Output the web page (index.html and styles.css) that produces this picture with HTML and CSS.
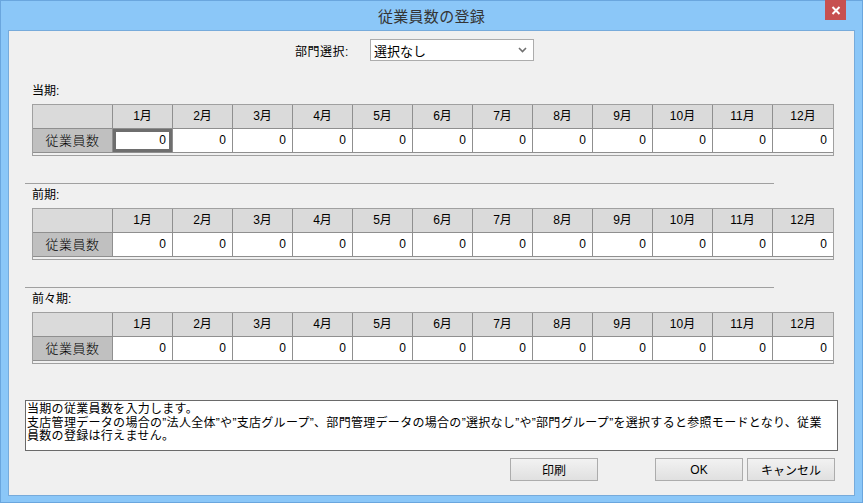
FILE: index.html
```html
<!DOCTYPE html>
<html lang="ja">
<head>
    <meta charset="UTF-8">
    <title>従業員数の登録</title>
    <link rel="stylesheet" href="styles.css">
</head>
<body>
    <div class="window">
        <div class="titlebar">
            <span></span>
            <span class="title">従業員数の登録</span>
            <button class="close" type="button">
                <svg width="10" height="9" viewBox="0 0 10 9"><path d="M1.5 1 L8.5 8 M8.5 1 L1.5 8" stroke="#fff" stroke-width="2" fill="none"/></svg>
            </button>
        </div>
        <div class="client">
            <div class="dept-row">
                <label class="dept-label">部門選択:</label>
                <div class="select">
                    <span>選択なし</span>
                    <svg class="chev" width="9" height="6" viewBox="0 0 9 6"><path d="M1 1 L4.5 4.5 L8 1" stroke="#707070" stroke-width="1.6" fill="none"/></svg>
                </div>
            </div>

            <!-- 当期 -->
            <div class="period-label first">当期:</div>
            <div class="grid">
                <div class="grid-row head">
                    <div class="cell"></div>
                    <div class="cell">1月</div><div class="cell">2月</div><div class="cell">3月</div><div class="cell">4月</div>
                    <div class="cell">5月</div><div class="cell">6月</div><div class="cell">7月</div><div class="cell">8月</div>
                    <div class="cell">9月</div><div class="cell">10月</div><div class="cell">11月</div><div class="cell">12月</div>
                </div>
                <div class="grid-row data">
                    <div class="cell row-label">従業員数</div>
                    <div class="cell num selected">0</div><div class="cell num">0</div><div class="cell num">0</div><div class="cell num">0</div>
                    <div class="cell num">0</div><div class="cell num">0</div><div class="cell num">0</div><div class="cell num">0</div>
                    <div class="cell num">0</div><div class="cell num">0</div><div class="cell num">0</div><div class="cell num">0</div>
                </div>
            </div>

            <div class="sep"></div>

            <!-- 前期 -->
            <div class="period-label">前期:</div>
            <div class="grid">
                <div class="grid-row head">
                    <div class="cell"></div>
                    <div class="cell">1月</div><div class="cell">2月</div><div class="cell">3月</div><div class="cell">4月</div>
                    <div class="cell">5月</div><div class="cell">6月</div><div class="cell">7月</div><div class="cell">8月</div>
                    <div class="cell">9月</div><div class="cell">10月</div><div class="cell">11月</div><div class="cell">12月</div>
                </div>
                <div class="grid-row data">
                    <div class="cell row-label">従業員数</div>
                    <div class="cell num">0</div><div class="cell num">0</div><div class="cell num">0</div><div class="cell num">0</div>
                    <div class="cell num">0</div><div class="cell num">0</div><div class="cell num">0</div><div class="cell num">0</div>
                    <div class="cell num">0</div><div class="cell num">0</div><div class="cell num">0</div><div class="cell num">0</div>
                </div>
            </div>

            <div class="sep"></div>

            <!-- 前々期 -->
            <div class="period-label">前々期:</div>
            <div class="grid">
                <div class="grid-row head">
                    <div class="cell"></div>
                    <div class="cell">1月</div><div class="cell">2月</div><div class="cell">3月</div><div class="cell">4月</div>
                    <div class="cell">5月</div><div class="cell">6月</div><div class="cell">7月</div><div class="cell">8月</div>
                    <div class="cell">9月</div><div class="cell">10月</div><div class="cell">11月</div><div class="cell">12月</div>
                </div>
                <div class="grid-row data">
                    <div class="cell row-label">従業員数</div>
                    <div class="cell num">0</div><div class="cell num">0</div><div class="cell num">0</div><div class="cell num">0</div>
                    <div class="cell num">0</div><div class="cell num">0</div><div class="cell num">0</div><div class="cell num">0</div>
                    <div class="cell num">0</div><div class="cell num">0</div><div class="cell num">0</div><div class="cell num">0</div>
                </div>
            </div>

            <div class="message">
                <div class="msg-line">当期の従業員数を入力します。</div>
                <div class="msg-line">支店管理データの場合の”法人全体”や”支店グループ”、部門管理データの場合の”選択なし”や”部門グループ”を選択すると参照モードとなり、従業</div>
                <div class="msg-line">員数の登録は行えません。</div>
            </div>

            <div class="buttons">
                <button type="button" class="btn print">印刷</button>
                <button type="button" class="btn">OK</button>
                <button type="button" class="btn">キャンセル</button>
            </div>
        </div>
    </div>
</body>
</html>
```

FILE: styles.css
```css
body {
    margin: 0;
    padding: 0;
    font-family: "Liberation Sans", "Noto Sans CJK JP", sans-serif;
    font-size: 12px;
    color: #000;
}
.window {
    width: 863px;
    height: 503px;
    box-sizing: border-box;
    background: #8bc7f8;
    border: 1px solid #6aa6de;
    padding: 0 7px 7px 7px;
}
.titlebar {
    height: 29px;
    display: grid;
    grid-template-columns: 1fr auto 1fr;
    align-items: start;
}
.title {
    font-family: "Noto Sans CJK JP", sans-serif;
    font-size: 15px;
    line-height: 30px;
    color: #343434;
    letter-spacing: 0.3px;
}
.close {
    justify-self: end;
    width: 21px;
    height: 20px;
    margin: -1px 9px 0 0;
    padding: 0;
    border: none;
    background: #c75050;
    display: flex;
    align-items: center;
    justify-content: center;
}
.client {
    height: 466px;
    box-sizing: border-box;
    background: #f0f0f0;
    border: 1px solid #77abdb;
    padding-top: 8px;
}
.dept-row {
    display: flex;
    align-items: center;
    height: 22px;
    padding-left: 286px;
}
.dept-label {
    width: 75px;
    letter-spacing: 0.5px;
}
.select {
    width: 164px;
    height: 22px;
    box-sizing: border-box;
    border: 1px solid #acacac;
    background: #fff;
    display: flex;
    align-items: center;
    justify-content: space-between;
    padding: 0 6px 0 3px;
    font-size: 13px;
}
.period-label {
    height: 21px;
    margin-top: 3px;
    line-height: 16px;
    padding-left: 23px;
    font-size: 12px;
}
.period-label.first {
    margin-top: 22px;
}
.grid {
    width: 802px;
    box-sizing: border-box;
    margin-left: 23px;
    border: 1px solid #a0a0a0;
    padding-bottom: 2px;
    background: #f0f0f0;
}
.grid-row {
    display: grid;
    grid-template-columns: 80px repeat(12, 60px);
}
.cell {
    height: 24px;
    box-sizing: border-box;
    border-right: 1px solid #8f8f8f;
    border-bottom: 1px solid #8f8f8f;
    line-height: 23px;
    text-align: center;
    font-size: 12px;
}
.cell:last-child {
    border-right: none;
}
.head .cell {
    background: #dadada;
}
.data .cell {
    background: #fff;
}
.data .row-label {
    background: #c0c0c0;
    font-size: 13px;
    font-weight: 300;
    letter-spacing: 0.5px;
}
.num {
    text-align: right;
    padding-right: 6px;
}
.selected {
    box-shadow: inset 0 0 0 3px #6e6e6e;
}
.sep {
    width: 749px;
    margin: 27px 0 0 16px;
    border-top: 1px solid #a0a0a0;
}
.message {
    width: 813px;
    height: 51px;
    box-sizing: border-box;
    margin: 36px 0 0 16px;
    border: 1px solid #6a6a6a;
    background: #fff;
    padding: 2px 1px;
    overflow: hidden;
}
.msg-line {
    white-space: nowrap;
    line-height: 13.5px;
    font-size: 12px;
    letter-spacing: 0.3px;
}
.buttons {
    display: flex;
    justify-content: flex-end;
    gap: 4px;
    margin-top: 7px;
    padding-right: 19px;
}
.btn {
    width: 88px;
    height: 23px;
    border: 1px solid #acacac;
    background: linear-gradient(#f2f2f2, #e0e0e0);
    font-family: "Liberation Sans", "Noto Sans CJK JP", sans-serif;
    font-size: 12px;
    color: #000;
    padding: 0;
}
.btn.print {
    margin-right: 53px;
}
```
